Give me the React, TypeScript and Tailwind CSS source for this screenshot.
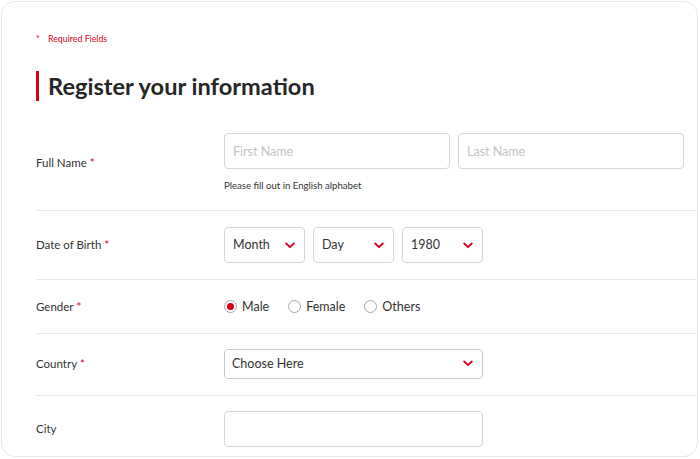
import { useState } from "react";

const RED = "text-[#d9001b]";

function Chevron() {
  return (
    <svg width="10" height="7" viewBox="0 0 10 7" className="shrink-0">
      <polyline
        points="1.2,1.5 5,5.2 8.8,1.5"
        fill="none"
        stroke="#d9001b"
        strokeWidth="1.8"
        strokeLinecap="round"
        strokeLinejoin="round"
      />
    </svg>
  );
}

function Label({ text, required }: { text: string; required?: boolean }) {
  return (
    <div className="w-[188px] shrink-0 text-[11.5px] leading-[14px] text-[#333]">
      {text}
      {required ? <span className={`ml-[3px] ${RED}`}>*</span> : null}
    </div>
  );
}

function Select({ value }: { value: string }) {
  return (
    <div className="flex h-[36px] w-[81px] items-center justify-between rounded-[4px] border border-[#d6d6d6] pl-[8px] pr-[9px] text-[12.5px] text-[#333]">
      <span className="pt-[1px]">{value}</span>
      <Chevron />
    </div>
  );
}

function Radio({
  label,
  checked,
  onPick,
}: {
  label: string;
  checked: boolean;
  onPick: () => void;
}) {
  return (
    <button type="button" onClick={onPick} className="flex items-center gap-[5px] text-[12.5px] text-[#333]">
      <span className="flex h-[13px] w-[13px] items-center justify-center rounded-full border border-[#a8a8a8] bg-white">
        {checked ? <span className="h-[7px] w-[7px] rounded-full bg-[#d9001b]" /> : null}
      </span>
      <span className="pt-[1px]">{label}</span>
    </button>
  );
}

export default function App() {
  const [gender, setGender] = useState("Male");

  return (
    <div className="h-[459px] w-[700px] bg-white pl-[1px] pt-[1px] font-['Lato','Liberation_Sans',sans-serif]">
      <div className="h-[456px] w-[697px] overflow-hidden rounded-[14px] border border-[#e8e8e8] pl-[34px] pt-[31px]">
        <div className={`flex items-center text-[8.8px] leading-[12px] ${RED}`}>
          <span className="w-[12px]">*</span>
          <span>Required Fields</span>
        </div>

        <div className="mt-[26px] flex items-center">
          <div className="h-[30px] w-[3px] bg-[#d9001b]" />
          <h1 className="ml-[9px] text-[23.6px] font-bold leading-[30px] text-[#262626]">
            Register your information
          </h1>
        </div>

        {/* Full name */}
        <div className="flex h-[110px] items-start border-b border-[#e6e6e6] pt-[32px]">
          <div className="mt-[23px]">
            <Label text="Full Name" required />
          </div>
          <div className="flex flex-col">
            <div className="flex gap-[8px]">
              <input
                placeholder="First Name"
                className="h-[36px] w-[226px] rounded-[4px] border border-[#d6d6d6] px-[8px] text-[12.5px] outline-none placeholder:text-[#c4c4c4]"
              />
              <input
                placeholder="Last Name"
                className="h-[36px] w-[226px] rounded-[4px] border border-[#d6d6d6] px-[8px] text-[12.5px] outline-none placeholder:text-[#c4c4c4]"
              />
            </div>
            <p className="mt-[10px] text-[9.6px] text-[#333]">Please fill out in English alphabet</p>
          </div>
        </div>

        {/* Date of birth */}
        <div className="flex h-[69px] items-center border-b border-[#e6e6e6]">
          <Label text="Date of Birth" required />
          <div className="flex gap-[8px]">
            <Select value="Month" />
            <Select value="Day" />
            <Select value="1980" />
          </div>
        </div>

        {/* Gender */}
        <div className="flex h-[54px] items-center border-b border-[#e6e6e6]">
          <Label text="Gender" required />
          <div className="flex gap-[19px]">
            {["Male", "Female", "Others"].map((g) => (
              <Radio key={g} label={g} checked={gender === g} onPick={() => setGender(g)} />
            ))}
          </div>
        </div>

        {/* Country */}
        <div className="flex h-[62px] items-center border-b border-[#e6e6e6] pb-[2px]">
          <Label text="Country" required />
          <div className="flex h-[30px] w-[259px] items-center justify-between rounded-[4px] border border-[#c8c8c8] pl-[7px] pr-[9px] text-[12.5px] text-[#333]">
            <span className="pt-[1px]">Choose Here</span>
            <Chevron />
          </div>
        </div>

        {/* City */}
        <div className="flex h-[68px] items-center pb-[2px]">
          <Label text="City" />
          <input className="h-[36px] w-[259px] rounded-[4px] border border-[#d6d6d6] px-[8px] text-[12.5px] outline-none" />
        </div>
      </div>
    </div>
  );
}
